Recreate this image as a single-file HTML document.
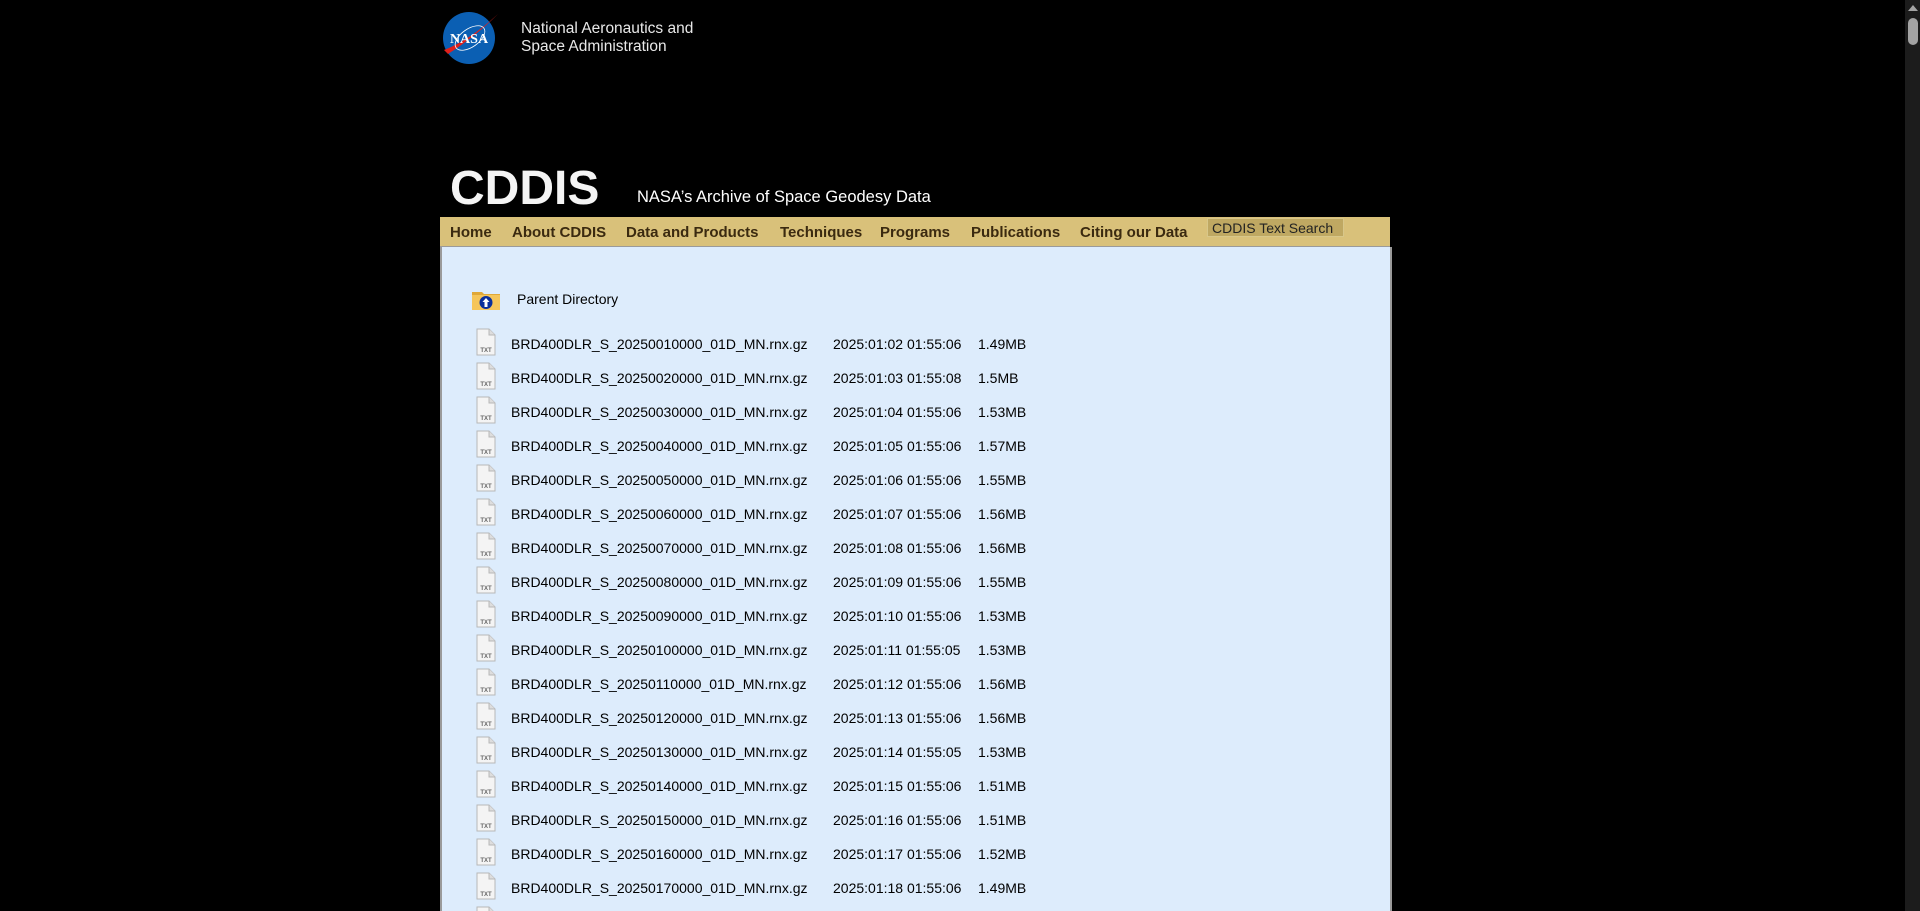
<!DOCTYPE html>
<html><head><meta charset="utf-8"><style>
*{margin:0;padding:0;box-sizing:border-box}
html,body{overflow:hidden}
body{width:1920px;height:911px;background:#000;position:relative;font-family:"Liberation Sans",Arial,sans-serif}
.a{position:absolute;white-space:nowrap}
.nav{position:absolute;left:440px;top:217px;width:950px;height:30px;background:#d9c17a;border-bottom:1px solid #9a9a9a}
.nav span{position:absolute;top:7px;font-weight:bold;font-size:15px;color:#3b2a10}
.panel{position:absolute;left:440px;top:247px;width:952px;height:664px;background:#ddecfc;border-left:2px solid #9a9a9a;border-right:2px solid #9a9a9a;overflow:hidden}
.row{position:absolute;left:0;width:900px;height:34px;font-size:14px;color:#000;white-space:nowrap}
.row span{position:absolute;top:0;white-space:nowrap}
.row .f{left:69px}
.row .d{left:391px}
.row .s{left:536px}
.row svg{position:absolute;left:34px;top:-8px}
</style></head><body>
<svg class="a" style="left:440px;top:10px" width="60" height="56" viewBox="0 0 60 56">
<circle cx="29" cy="28" r="26" fill="#0b5fb3"/>
<path d="M4 40 Q30 30 58 4 Q36 26 8 44Z" fill="#e0201b"/>
<ellipse cx="30" cy="28" rx="17" ry="9" fill="none" stroke="#fff" stroke-width="0.8" transform="rotate(-35 30 28)"/>
<text x="29" y="33" text-anchor="middle" font-family="Liberation Serif,serif" font-weight="bold" font-size="14" fill="#fff">NASA</text>
</svg>
<div class="a" style="left:521px;top:20px;font-size:15.5px;color:#e8e8e8;line-height:18px">National Aeronautics and<br>Space Administration</div>
<div class="a" style="left:450px;top:161px;font-size:48px;color:#f4f4f4;font-weight:bold;line-height:56px">CDDIS</div>
<div class="a" style="left:637px;top:188px;font-size:16.5px;color:#fff">NASA’s Archive of Space Geodesy Data</div>
<div class="nav">
<span style="left:10px">Home</span>
<span style="left:72px">About CDDIS</span>
<span style="left:186px">Data and Products</span>
<span style="left:340px">Techniques</span>
<span style="left:440px">Programs</span>
<span style="left:531px">Publications</span>
<span style="left:640px">Citing our Data</span>
<div style="position:absolute;left:767px;top:1px;width:137px;height:19px;background:#bfa862;border:1px solid #d8c78a;font-size:14px;color:#222;padding:1px 0 0 4px">CDDIS Text Search</div>
</div>
<div class="panel">
<svg class="a" style="left:29px;top:42px" width="30" height="22" viewBox="0 0 30 22"><path d="M1 3h10l2 2h16v16H1z" fill="#e0a838"/><rect x="1" y="6" width="28" height="15" fill="#f5c55a"/><circle cx="15" cy="13.5" r="6.5" fill="#0a2f9c"/><path d="M15 9l3.5 4h-2v5h-3v-5h-2z" fill="#fff"/></svg>
<div class="a" style="left:75px;top:44px;font-size:14px">Parent Directory</div>
<div id="rows"></div>
</div>
<div class="a" style="left:1905px;top:0;width:15px;height:911px;background:#1c1c1c"></div>
<div class="a" style="left:1908px;top:18px;width:10px;height:27px;background:#a3a3a3;border-radius:5px"></div>
<div class="a" style="left:1908px;top:5px;width:0;height:0;border-left:5px solid transparent;border-right:5px solid transparent;border-bottom:6px solid #a3a3a3"></div>
<script>
var d=[["01","02 01:55:06","1.49MB"],["02","03 01:55:08","1.5MB"],["03","04 01:55:06","1.53MB"],["04","05 01:55:06","1.57MB"],["05","06 01:55:06","1.55MB"],["06","07 01:55:06","1.56MB"],["07","08 01:55:06","1.56MB"],["08","09 01:55:06","1.55MB"],["09","10 01:55:06","1.53MB"],["10","11 01:55:05","1.53MB"],["11","12 01:55:06","1.56MB"],["12","13 01:55:06","1.56MB"],["13","14 01:55:05","1.53MB"],["14","15 01:55:06","1.51MB"],["15","16 01:55:06","1.51MB"],["16","17 01:55:06","1.52MB"],["17","18 01:55:06","1.49MB"],["18","19 01:55:06","1.50MB"]];
var h="";
var ic='<svg width="20" height="28" viewBox="0 0 20 28"><path d="M1 1h12l6 6v20H1z" fill="#f4f4f4" stroke="#b8b8b8"/><path d="M13 1v6h6" fill="#ddd" stroke="#b8b8b8"/><text x="10" y="24" text-anchor="middle" font-size="6" font-family="Liberation Sans" fill="#666" font-weight="bold">TXT</text></svg>';
for(var i=0;i<d.length;i++){h+='<div class="row" style="top:'+(89+i*34)+'px">'+ic+'<span class="f">BRD400DLR_S_20250'+d[i][0]+'0000_01D_MN.rnx.gz</span><span class="d">2025:01:'+d[i][1]+'</span><span class="s">'+d[i][2]+'</span></div>';}
document.getElementById("rows").innerHTML=h;
</script>
</body></html>
